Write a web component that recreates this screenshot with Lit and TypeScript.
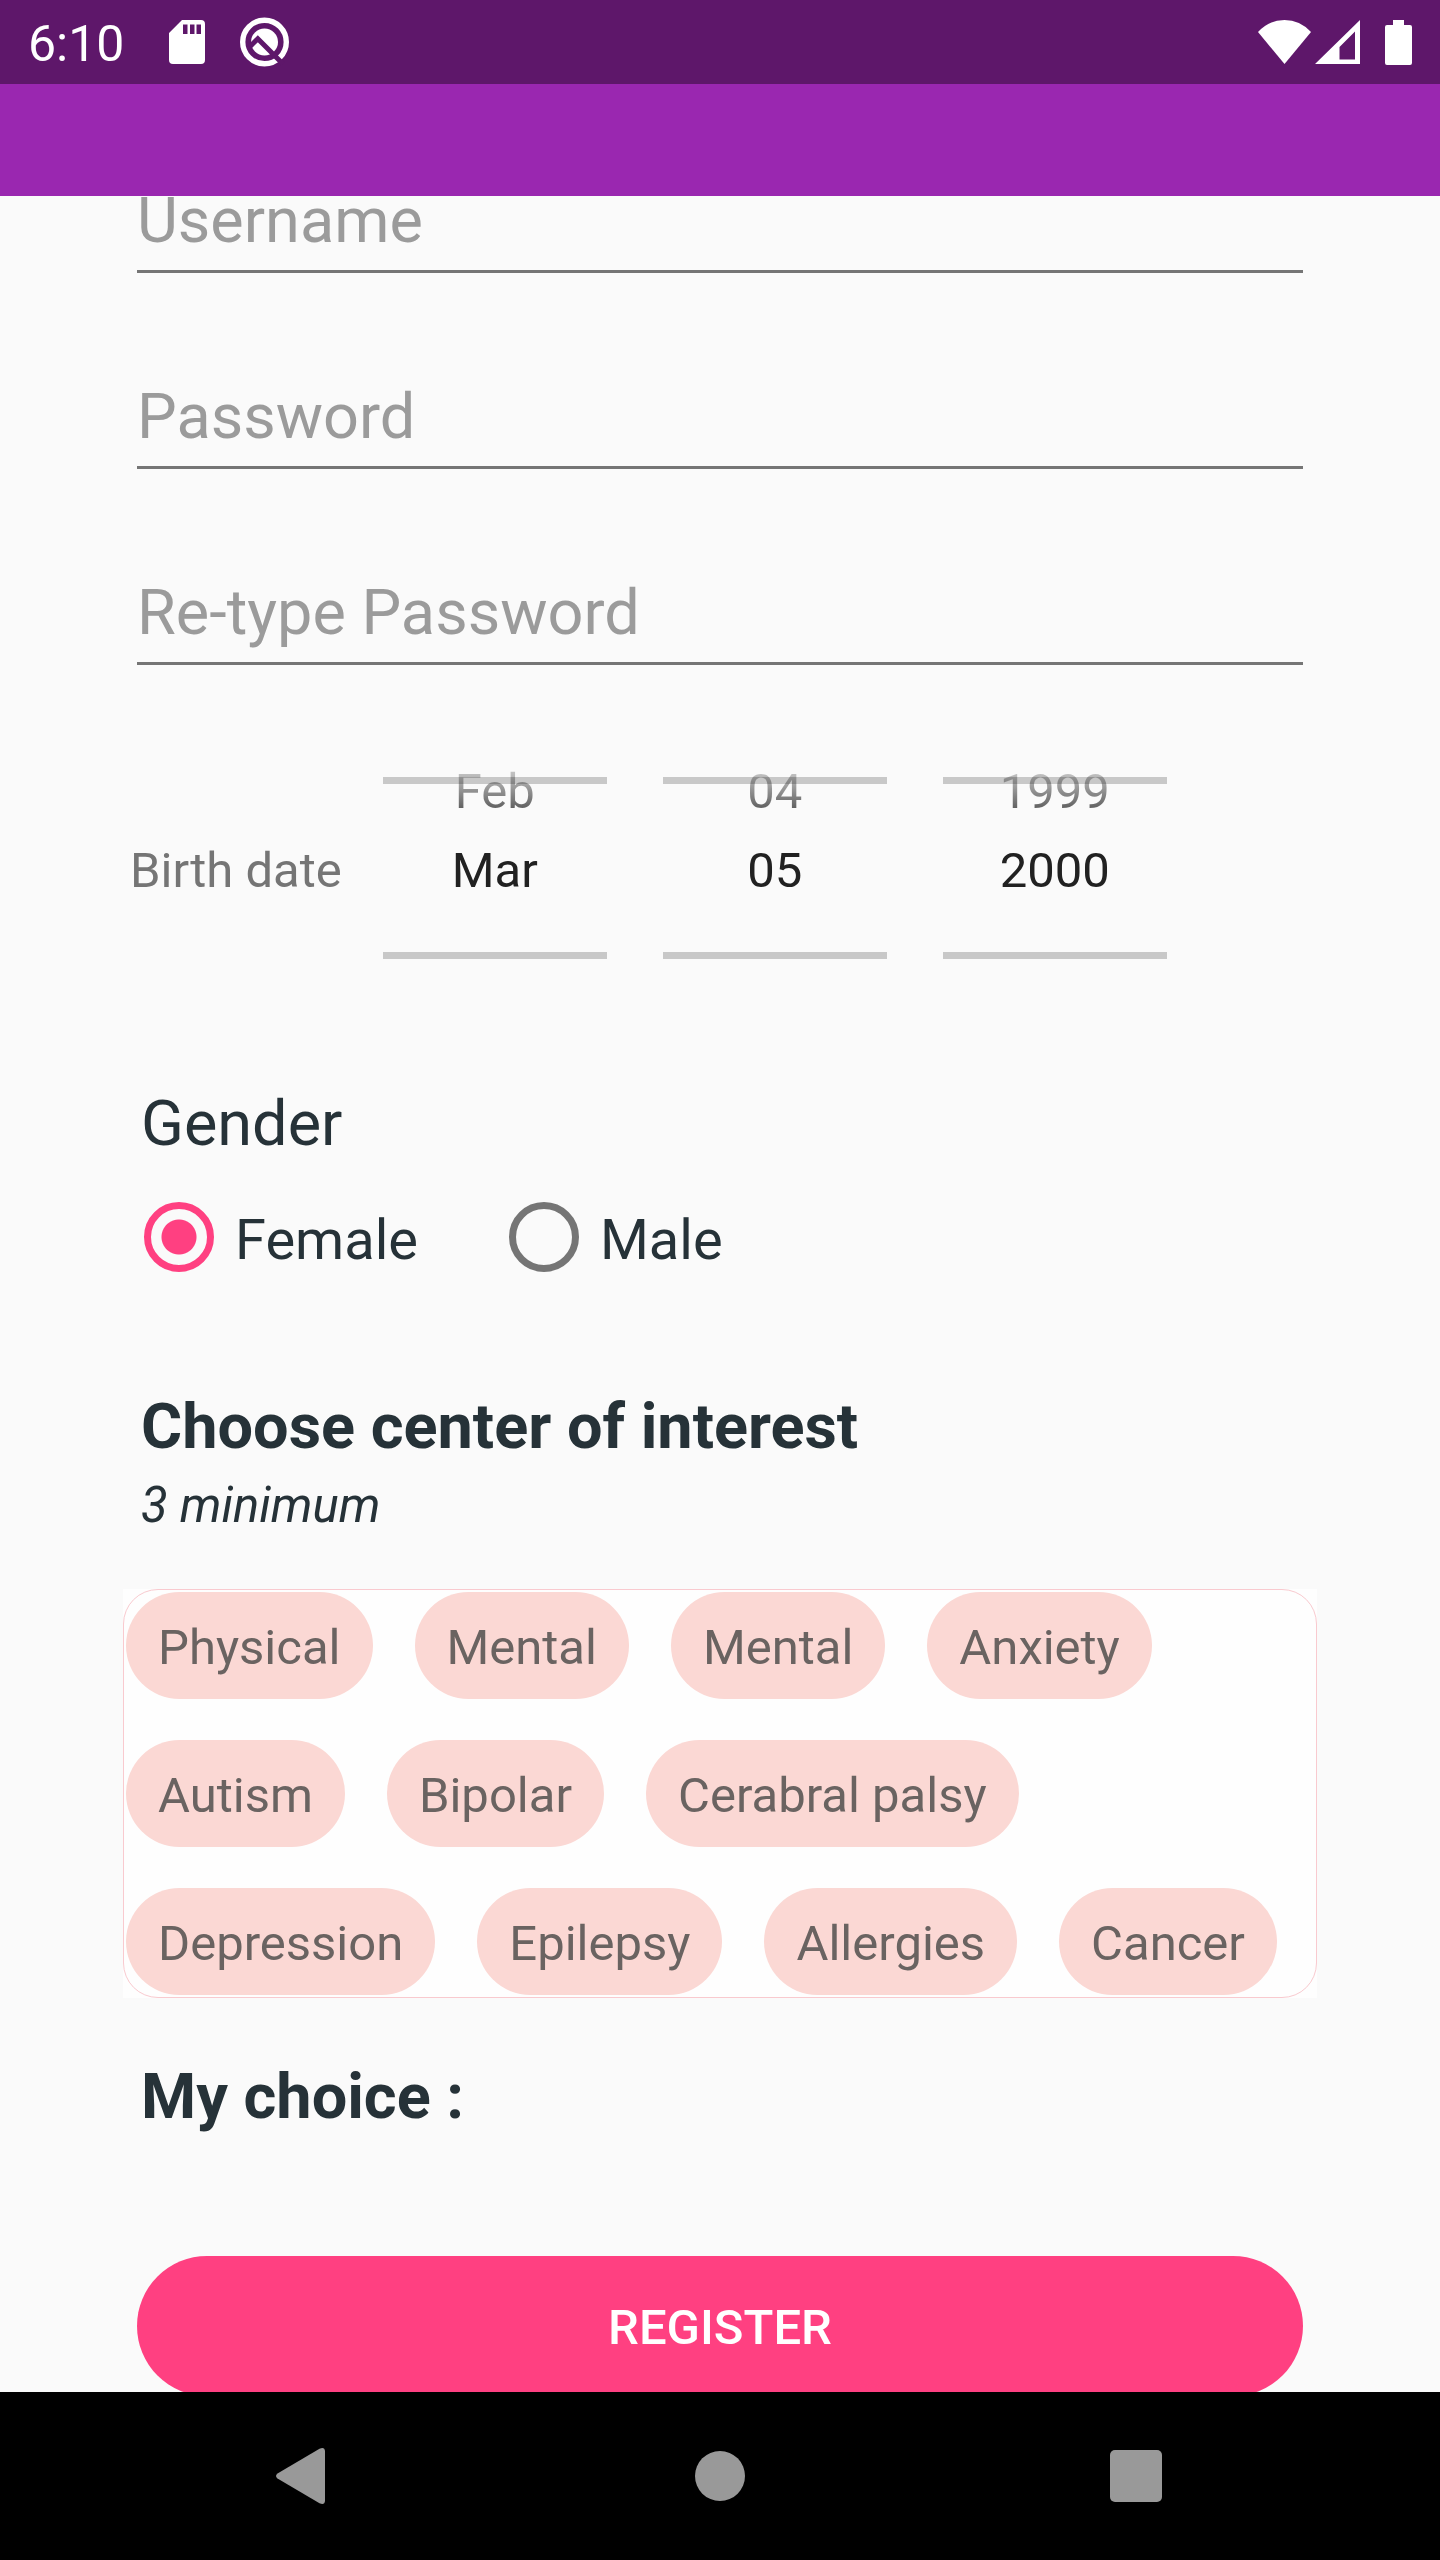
import { LitElement, html, css } from "lit";
import { customElement, property, state } from "lit/decorators.js";

const MONTHS = ["Jan", "Feb", "Mar", "Apr", "May", "Jun", "Jul", "Aug", "Sep", "Oct", "Nov", "Dec"];
const INTERESTS = [
  "Physical", "Mental", "Mental", "Anxiety", "Autism", "Bipolar",
  "Cerabral palsy", "Depression", "Epilepsy", "Allergies", "Cancer",
];

@customElement("status-bar")
class StatusBar extends LitElement {
  static styles = css`
    :host {
      display: flex;
      align-items: center;
      justify-content: space-between;
      height: 84px;
      padding: 0 28px;
      background: #5e176a;
      color: #fff;
      font: 50px/60px Roboto, sans-serif;
    }
    .left { display: flex; align-items: center; }
    .right { display: flex; align-items: center; }
    .time { padding-top: 4px; }
    svg { display: block; }
    .card { margin: 0 35px 0 45px; }
    .signal { margin: 0 25px 0 4px; }
  `;

  render() {
    return html`
      <div class="left">
        <span class="time">6:10</span>
        <svg class="card" width="36" height="44" viewBox="0 0 36 44" aria-hidden="true">
          <path fill="#fff" fill-rule="evenodd"
            d="M13 0H32Q36 0 36 4V40Q36 44 32 44H4Q0 44 0 40V13ZM14 4.500V14H18.500V4.500ZM21 4.500V14H25.500V4.500ZM27.500 4.500V14H32V4.500Z" />
        </svg>
        <svg width="49" height="50" viewBox="0 0 49 50" aria-hidden="true">
          <circle cx="24.500" cy="25" r="21.800" fill="none" stroke="#fff" stroke-width="5.400" />
          <circle cx="24.500" cy="25" r="13.500" fill="#fff" />
          <path d="M10 29.500L17.800 21.800L43 47" fill="none" stroke="#5e176a" stroke-width="5" />
        </svg>
      </div>
      <div class="right">
        <svg width="53" height="44" viewBox="0 0 53 44" aria-hidden="true">
          <path fill="#fff" d="M0 12Q11 0 26.500 0T53 12L26.500 44Z" />
        </svg>
        <svg class="signal" width="45" height="44" viewBox="0 0 45 44" aria-hidden="true">
          <path fill="#fff" fill-rule="evenodd" d="M0 44L45 0V44ZM24.500 27V39.500H40V11.500Z" />
        </svg>
        <svg width="27" height="45" viewBox="0 0 27 45" aria-hidden="true">
          <path fill="#fff" d="M8 0H19V5H25Q27 5 27 7V43Q27 45 25 45H2Q0 45 0 43V7Q0 5 2 5H8Z" />
        </svg>
      </div>
    `;
  }
}

@customElement("value-picker")
class ValuePicker extends LitElement {
  @property() label = "";
  @property() previous = "";
  @property() value = "";

  static styles = css`
    :host {
      position: relative;
      display: grid;
      grid-template-rows: repeat(3, 57px);
      row-gap: 22px;
      width: 224px;
    }
    :host::before,
    :host::after {
      content: "";
      position: absolute;
      left: 0;
      right: 0;
      height: 7px;
      background: rgba(0, 0, 0, 0.2);
      pointer-events: none;
    }
    :host::before { top: 14px; }
    :host::after { bottom: 19px; }
    button,
    input {
      box-sizing: border-box;
      width: 100%;
      margin: 0;
      padding: 0;
      border: 0;
      background: none;
      font: 49px/57px Roboto, sans-serif;
      text-align: center;
      color: #212121;
    }
    .previous {
      color: transparent;
      background: linear-gradient(#d0d0d0 0, #bdbdbd 12px, #5c5c5c 47px);
      background-clip: text;
      -webkit-background-clip: text;
    }
  `;

  render() {
    return html`
      <button class="previous" type="button">${this.previous}</button>
      <input type="text" aria-label=${this.label} .value=${this.value} />
      <button type="button" aria-label="Next ${this.label}"></button>
    `;
  }
}

@customElement("nav-bar")
class NavBar extends LitElement {
  static styles = css`
    :host {
      display: grid;
      grid-template-columns: repeat(3, 1fr);
      height: 168px;
      padding: 0 96px;
      background: #000;
    }
    button {
      display: grid;
      place-items: center;
      margin: 0;
      padding: 0;
      border: 0;
      background: none;
    }
    svg { display: block; fill: #999; }
  `;

  render() {
    return html`
      <button type="button" aria-label="Back">
        <svg width="56" height="56" viewBox="0 0 56 56">
          <path d="M1.500 25.500L43.500 0.800Q48.500 -1.500 49 3V53Q48.500 57.500 43.500 55.200L1.500 30.500Q-1.500 28 1.500 25.500Z" />
        </svg>
      </button>
      <button type="button" aria-label="Home">
        <svg width="50" height="50" viewBox="0 0 50 50"><circle cx="25" cy="25" r="25" /></svg>
      </button>
      <button type="button" aria-label="Recent apps">
        <svg width="52" height="52" viewBox="0 0 52 52"><rect width="52" height="52" rx="5" /></svg>
      </button>
    `;
  }
}

@customElement("app-root")
class AppRoot extends LitElement {
  @state() private gender = "Female";
  @state() private month = 2;
  @state() private day = 5;
  @state() private year = 2000;

  static styles = css`
    :host {
      display: flex;
      flex-direction: column;
      height: 100vh;
      background: #fafafa;
      font-family: Roboto, sans-serif;
      color: #263238;
    }
    status-bar,
    .toolbar,
    nav-bar { flex: none; }
    .toolbar { height: 112px; background: #9a27b0; }
    .content {
      flex: 1;
      min-height: 0;
      overflow-y: auto;
      scrollbar-width: none;
      padding: 0 123px;
    }
    .fields {
      display: grid;
      gap: 106px;
      margin: -13px 14px 0;
    }
    .field {
      box-sizing: border-box;
      width: 100%;
      height: 90px;
      margin: 0;
      padding: 0 0 13px;
      border: 0;
      border-bottom: 3px solid #757575;
      border-radius: 0;
      background: none;
      font: 63px/74px Roboto, sans-serif;
      color: #263238;
    }
    .field::placeholder { color: #9b9b9b; opacity: 1; }
    .birth {
      display: flex;
      align-items: center;
      gap: 56px;
      margin-top: 98px;
      padding-left: 7px;
    }
    .birth-label {
      margin-right: -15px;
      font-size: 49px;
      line-height: 57px;
      color: #757575;
    }
    .gender {
      min-width: 0;
      margin: 109px 0 0;
      padding: 0;
      border: 0;
    }
    .title {
      margin: 0;
      padding: 0 18px;
      font-size: 63px;
      line-height: 74px;
      font-weight: 400;
    }
    .bold { font-weight: 700; }
    .options {
      display: flex;
      gap: 91px;
      margin-top: 41px;
      padding-left: 21px;
    }
    .option {
      display: flex;
      align-items: flex-end;
      gap: 21px;
      font-size: 56px;
      line-height: 64px;
    }
    .radio {
      appearance: none;
      box-sizing: border-box;
      width: 70px;
      height: 70px;
      margin: 0;
      border: 7px solid #757575;
      border-radius: 50%;
    }
    .radio:checked {
      border-color: #ff4081;
      background: radial-gradient(circle, #ff4081 17px, transparent 18px);
    }
    .interest { margin-top: 118px; }
    .hint {
      margin: 13px 0 0;
      padding: 0 18px;
      font-size: 49px;
      line-height: 57px;
      font-style: italic;
    }
    .panel { margin-top: 55px; background: #fefefe; }
    .chips {
      display: flex;
      flex-wrap: wrap;
      gap: 41px 42px;
      padding: 2px;
      border: 1px solid #f9cacf;
      border-radius: 35px;
    }
    .chip {
      margin: 0;
      padding: 27px 32px 23px;
      border: 0;
      border-radius: 54px;
      background: #fbd8d4;
      font: 49px/57px Roboto, sans-serif;
      color: #6a6361;
    }
    .choice { margin-top: 62px; }
    .submit { padding: 122px 14px 0; }
    .register {
      display: block;
      width: 100%;
      margin: 0;
      padding: 43px 0 40px;
      border: 0;
      border-radius: 70px;
      background: #ff4081;
      font: 500 49px/57px Roboto, sans-serif;
      color: #fff;
    }
  `;

  private renderOption(name: string) {
    return html`
      <label class="option">
        <input class="radio" type="radio" name="gender" .checked=${this.gender === name}
          @change=${() => (this.gender = name)} />
        <span>${name}</span>
      </label>
    `;
  }

  render() {
    const pad = (n: number) => String(n).padStart(2, "0");
    return html`
      <status-bar></status-bar>
      <header class="toolbar"></header>
      <main class="content">
        <form @submit=${(e: Event) => e.preventDefault()}>
          <div class="fields">
            <input class="field" type="text" placeholder="Username" aria-label="Username" />
            <input class="field" type="password" placeholder="Password" aria-label="Password" />
            <input class="field" type="password" placeholder="Re-type Password" aria-label="Re-type Password" />
          </div>
          <div class="birth" role="group" aria-labelledby="birth-label">
            <span class="birth-label" id="birth-label">Birth date</span>
            <value-picker label="Month" .previous=${MONTHS[this.month - 1]} .value=${MONTHS[this.month]}></value-picker>
            <value-picker label="Day" .previous=${pad(this.day - 1)} .value=${pad(this.day)}></value-picker>
            <value-picker label="Year" .previous=${String(this.year - 1)} .value=${String(this.year)}></value-picker>
          </div>
          <fieldset class="gender">
            <legend class="title">Gender</legend>
            <div class="options">${["Female", "Male"].map((name) => this.renderOption(name))}</div>
          </fieldset>
          <h2 class="title bold interest">Choose center of interest</h2>
          <p class="hint">3 minimum</p>
          <div class="panel">
            <div class="chips">
              ${INTERESTS.map((name) => html`<button class="chip" type="button">${name}</button>`)}
            </div>
          </div>
          <h2 class="title bold choice">My choice :</h2>
          <div class="submit"><button class="register" type="submit">REGISTER</button></div>
        </form>
      </main>
      <nav-bar></nav-bar>
    `;
  }
}
